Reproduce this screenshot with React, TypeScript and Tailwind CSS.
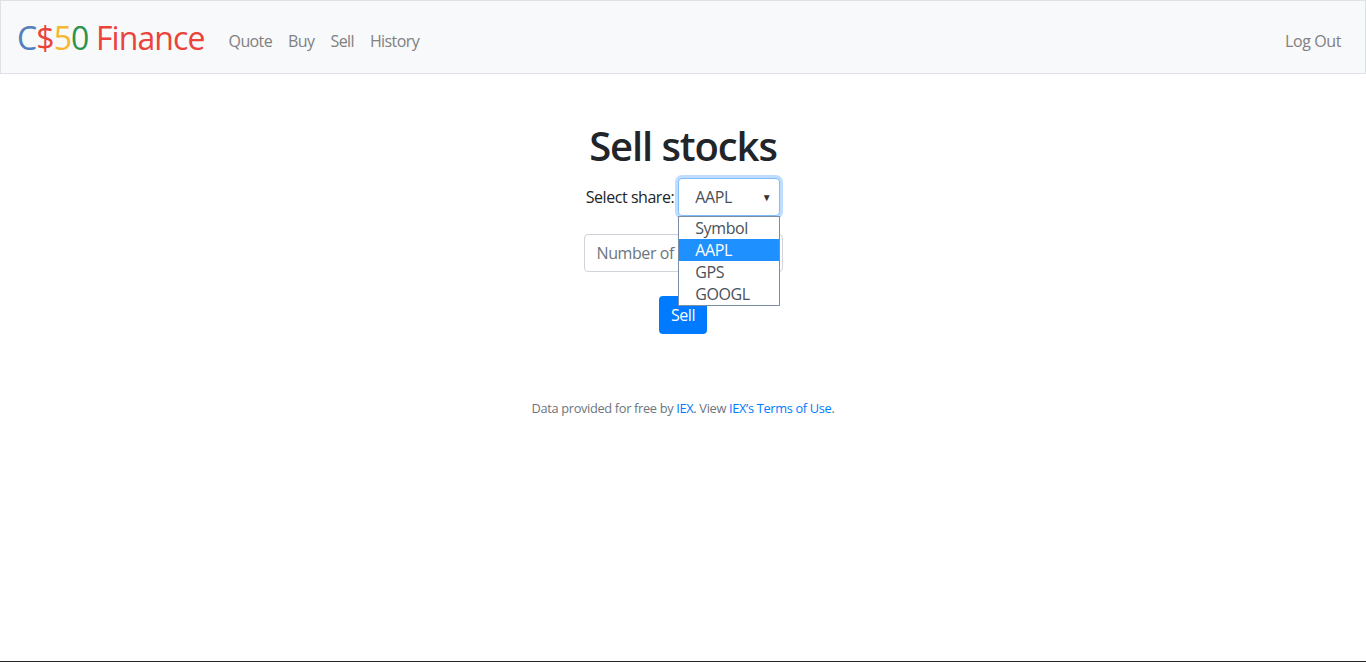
const options = ['Symbol', 'AAPL', 'GPS', 'GOOGL']

export default function App() {
  return (
    <div className="min-h-screen flex flex-col bg-white font-['Open_Sans','Noto_Sans',sans-serif] text-[#212529]">
      <nav className="h-[74px] border border-[#dee2e6] bg-[#f8f9fa] flex items-center px-4">
        <a href="#" className="text-[32px] leading-none mr-4 mt-[2px] tracking-[-0.9px]">
          <span className="text-[#537fbe]">C</span>
          <span className="text-[#ea433b]">$</span>
          <span className="text-[#f5b82e]">5</span>
          <span className="text-[#2e944b]">0</span>
          <span className="text-[#ea433b]"> Finance</span>
        </a>
        <ul className="flex mt-2 text-[16px] text-[#808080] tracking-[-0.6px]">
          {['Quote', 'Buy', 'Sell', 'History'].map((item) => (
            <li key={item}>
              <a href="#" className="block px-2 py-2">
                {item}
              </a>
            </li>
          ))}
        </ul>
        <a href="#" className="ml-auto mt-2 px-2 py-2 text-[16px] text-[#808080] tracking-[-0.4px]">
          Log Out
        </a>
      </nav>

      <main className="flex-1 pt-12 text-center">
        <h1 className="text-[40px] font-semibold leading-[48px] mb-2 tracking-[-1.1px]">Sell stocks</h1>
        <form className="flex flex-col items-center">
          <div className="flex items-center h-[38px]">
            <label className="text-[16px] mr-1 tracking-[-0.45px]">Select share:</label>
            <div className="relative">
              <div className="w-[102px] h-[38px] rounded border border-[#80bdff] shadow-[0_0_0_3px_rgba(0,123,255,0.25)] bg-white flex items-center pl-4 pr-2 text-[16px] text-[#495057] tracking-[-0.4px]">
                <span>AAPL</span>
                <span className="ml-auto text-[10px] text-[#333]">▼</span>
              </div>
              <ul className="absolute left-0 top-[38px] w-[102px] z-10 bg-white border border-[#7a8ea8] text-left text-[16px] text-[#495057] tracking-[-0.4px]">
                {options.map((o) => (
                  <li
                    key={o}
                    className={
                      o === 'AAPL'
                        ? 'h-[22px] leading-[22px] pl-4 bg-[#1e90ff] text-white'
                        : 'h-[22px] leading-[22px] pl-4'
                    }
                  >
                    {o}
                  </li>
                ))}
              </ul>
            </div>
          </div>
          <input
            className="mt-[18px] w-[199px] h-[38px] rounded border border-[#ced4da] px-3 text-[16px] tracking-[-0.4px] placeholder:text-[#6c757d] outline-none"
            placeholder="Number of shares"
            type="number"
          />
          <button
            type="button"
            className="mt-6 h-[38px] px-3 rounded bg-[#007bff] text-white text-[16px] tracking-[-0.4px]"
          >
            Sell
          </button>
        </form>
        <footer className="mt-[65px] text-[12.8px] text-[#6c757d] tracking-[-0.33px]">
          Data provided for free by <a href="#" className="text-[#007bff]">IEX</a>. View{' '}
          <a href="#" className="text-[#007bff]">IEX’s Terms of Use</a>.
        </footer>
      </main>
      <div className="h-px bg-[#222]" />
    </div>
  )
}
